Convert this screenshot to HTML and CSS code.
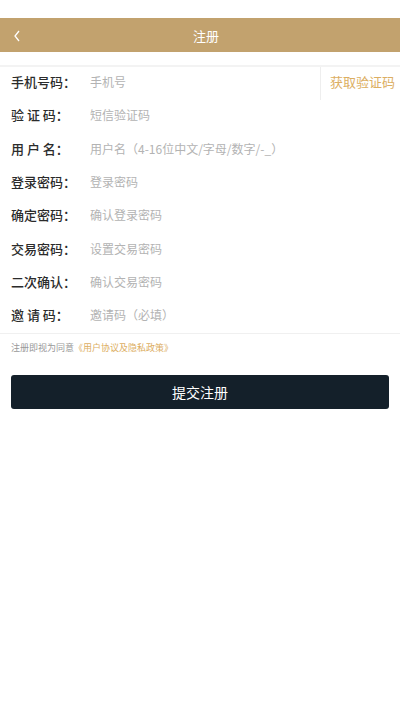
FILE: index.html
```html
<!DOCTYPE html>
<html lang="zh-CN">
<head>
    <meta charset="UTF-8">
    <meta name="viewport" content="width=device-width, initial-scale=1.0">
    <title>注册</title>
    <link rel="stylesheet" href="styles.css">
</head>
<body>

    <div class="status"></div>

    <div class="header">
        <span class="back">
            <svg width="10" height="14" viewBox="0 0 10 14"><path d="M7 2 L3 7 L7 12" fill="none" stroke="#fff" stroke-width="1.3"/></svg>
        </span>
        <h1>注册</h1>
    </div>

    <div class="form">
        <div class="row">
            <label>手机号码：</label>
            <input type="text" placeholder="手机号">
            <span class="code-btn">获取验证码</span>
        </div>
        <div class="row">
            <label>验 证 码：</label>
            <input type="text" placeholder="短信验证码">
        </div>
        <div class="row">
            <label>用 户 名：</label>
            <input type="text" placeholder="用户名（4-16位中文/字母/数字/-_）">
        </div>
        <div class="row">
            <label>登录密码：</label>
            <input type="password" placeholder="登录密码">
        </div>
        <div class="row">
            <label>确定密码：</label>
            <input type="password" placeholder="确认登录密码">
        </div>
        <div class="row">
            <label>交易密码：</label>
            <input type="password" placeholder="设置交易密码">
        </div>
        <div class="row">
            <label>二次确认：</label>
            <input type="password" placeholder="确认交易密码">
        </div>
        <div class="row">
            <label>邀 请 码：</label>
            <input type="text" placeholder="邀请码（必填）">
        </div>
    </div>

    <p class="agree">注册即视为同意<a href="#">《用户协议及隐私政策》</a></p>

    <button class="submit">提交注册</button>

</body>
</html>
```

FILE: styles.css
```css
body {
    font-family: "Noto Sans CJK SC", "Noto Sans", sans-serif;
    background-color: #fff;
    margin: 0;
    padding: 0;
}
.status {
    height: 18px;
}
.header {
    height: 34px;
    background-color: #c2a26e;
    display: flex;
    align-items: center;
    justify-content: center;
    position: relative;
}
.header h1 {
    margin: 0;
    padding-left: 12px;
    font-size: 13px;
    font-weight: normal;
    color: #fff;
}
.back {
    position: absolute;
    left: 12px;
    top: 11px;
    display: flex;
}
.form {
    margin-top: 13px;
    border-top: 2px solid #f3f3f3;
    border-bottom: 1px solid #f0f0f0;
}
.row {
    height: 33.3px;
    box-sizing: border-box;
    padding-bottom: 4px;
    display: flex;
    align-items: center;
    padding-left: 11px;
}
.row label {
    width: 79px;
    font-size: 13px;
    font-weight: 500;
    color: #2b2b2b;
    white-space: pre;
}
.row input {
    flex: 1;
    border: none;
    outline: none;
    padding: 0;
    font-family: inherit;
    font-size: 12px;
    color: #333;
    background: transparent;
}
.row input::placeholder {
    color: #b3b3b3;
}
.code-btn {
    align-self: stretch;
    display: flex;
    align-items: center;
    width: 70px;
    margin-bottom: -4px;
    padding-left: 9px;
    padding-bottom: 4px;
    border-left: 1px solid #eee;
    font-size: 13px;
    color: #dcae62;
}
.agree {
    margin: 7px 11px 0;
    font-size: 9px;
    color: #999;
}
.agree a {
    color: #dcae62;
    text-decoration: none;
}
.submit {
    display: block;
    width: 378px;
    height: 34px;
    margin: 21px 11px 0;
    background-color: #14202a;
    color: #fff;
    border: none;
    border-radius: 3px;
    font-family: inherit;
    font-size: 14px;
}
```
